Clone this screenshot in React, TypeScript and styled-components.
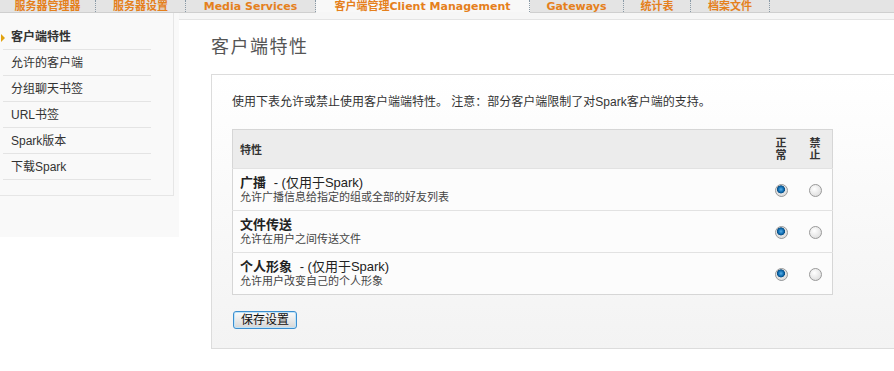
import styled, { createGlobalStyle } from "styled-components";

const GlobalStyle = createGlobalStyle`
  html, body {
    margin: 0;
    padding: 0;
    background: #ffffff;
    font-family: "Liberation Sans", "Noto Sans CJK SC", sans-serif;
    color: #333;
  }
`;

const tabs = [
  { label: "服务器管理器", width: 95 },
  { label: "服务器设置", width: 89 },
  { label: "Media Services", width: 129 },
  { label: "客户端管理Client Management", width: 213 },
  { label: "Gateways", width: 93 },
  { label: "统计表", width: 66 },
  { label: "档案文件", width: 78 },
];

const menu = ["客户端特性", "允许的客户端", "分组聊天书签", "URL书签", "Spark版本", "下载Spark"];

const features = [
  { name: "广播", note: " - (仅用于Spark)", desc: "允许广播信息给指定的组或全部的好友列表" },
  { name: "文件传送", note: "", desc: "允许在用户之间传送文件" },
  { name: "个人形象", note: " - (仅用于Spark)", desc: "允许用户改变自己的个人形象" },
];

export default function App() {
  return (
    <>
      <GlobalStyle />
      <TabBar>
        {tabs.map((t, i) => (
          <Tab key={t.label} $active={i === 3} $width={t.width}>
            {t.label}
          </Tab>
        ))}
        <TabRest />
      </TabBar>
      <Body>
        <SideColumn>
          <SideBox>
            {menu.map((m, i) => (
              <MenuItem key={m} $active={i === 0}>
                {i === 0 && <Arrow />}
                {m}
              </MenuItem>
            ))}
          </SideBox>
        </SideColumn>
        <Main>
          <MainTop />
          <Content>
            <Title>客户端特性</Title>
            <Panel>
              <Intro>使用下表允许或禁止使用客户端端特性。 注意：部分客户端限制了对Spark客户端的支持。</Intro>
              <Table>
                <thead>
                  <tr>
                    <Th>特性</Th>
                    <ThSmall>正<br />常</ThSmall>
                    <ThSmall>禁<br />止</ThSmall>
                  </tr>
                </thead>
                <tbody>
                  {features.map((f) => (
                    <tr key={f.name}>
                      <Td>
                        <FeatName>
                          <b>{f.name}</b>
                          {f.note && <Note>{f.note}</Note>}
                        </FeatName>
                        <FeatDesc>{f.desc}</FeatDesc>
                      </Td>
                      <TdRadio>
                        <Radio type="radio" name={f.name} defaultChecked />
                      </TdRadio>
                      <TdRadio>
                        <Radio type="radio" name={f.name} />
                      </TdRadio>
                    </tr>
                  ))}
                </tbody>
              </Table>
              <SaveButton>保存设置</SaveButton>
            </Panel>
          </Content>
        </Main>
      </Body>
    </>
  );
}

const TabBar = styled.div`
  display: flex;
  height: 12px;
  background: #e4e4e4;
  border-bottom: 1px solid #cfcfcf;
`;

const Tab = styled.div<{ $active?: boolean; $width: number }>`
  width: ${(p) => p.$width}px;
  flex-shrink: 0;
  height: 12px;
  line-height: 13px;
  border-right: 1px dotted #8a9aa6;
  font-family: "DejaVu Sans", "Noto Sans CJK SC", sans-serif;
  font-size: 11px;
  font-weight: bold;
  text-align: center;
  color: #e5801c;
  white-space: nowrap;
  background: ${(p) => (p.$active ? "#f8f8f8" : "transparent")};
  ${(p) => p.$active && "box-shadow: 0 1px 0 #f6f6f6;"}
`;

const TabRest = styled.div`
  flex: 1;
`;

const Body = styled.div`
  display: flex;
  align-items: flex-start;
`;

const SideColumn = styled.div`
  width: 179px;
  height: 224px;
  flex-shrink: 0;
  background: #f9f9f9;
`;

const SideBox = styled.div`
  width: 174px;
  height: 183px;
  padding-top: 12px;
  box-sizing: border-box;
  border-right: 1px solid #e6e6e6;
  border-bottom: 1px solid #e6e6e6;
`;

const MenuItem = styled.div<{ $active?: boolean }>`
  position: relative;
  width: 148px;
  height: 25px;
  margin-left: 3px;
  padding-left: 8px;
  box-sizing: border-box;
  border-bottom: 1px solid #e4e4e4;
  line-height: 25px;
  font-size: 12px;
  font-weight: ${(p) => (p.$active ? "bold" : "normal")};
  color: #333;
  & + & {
    height: 26px;
    line-height: 26px;
  }
`;

const Arrow = styled.span`
  position: absolute;
  left: -2px;
  top: 9px;
  width: 0;
  height: 0;
  border-top: 4px solid transparent;
  border-bottom: 4px solid transparent;
  border-left: 4px solid #e1a20f;
`;

const Main = styled.div`
  flex: 1;
  min-width: 0;
`;

const MainTop = styled.div`
  height: 6px;
  background: #f6f6f6;
  border-bottom: 1px solid #e4e4e4;
`;

const Content = styled.div`
  padding-left: 32px;
`;

const Title = styled.h1`
  margin: 0;
  padding-top: 16px;
  height: 38px;
  line-height: 22px;
  font-size: 18px;
  font-weight: normal;
  letter-spacing: 1.5px;
  color: #555;
`;

const Panel = styled.div`
  border: 1px solid #dcdcdc;
  border-right: none;
  background: linear-gradient(#ffffff, #f3f3f3);
  padding: 19px 0 19px 20px;
`;

const Intro = styled.div`
  font-size: 12px;
  line-height: 16px;
  color: #333;
  margin-bottom: 19px;
`;

const Table = styled.table`
  width: 601px;
  border-collapse: collapse;
  border: 1px solid #d6d6d6;
  background: #fcfcfc;
`;

const Th = styled.th`
  height: 38px;
  padding: 0 0 0 7px;
  text-align: left;
  font-size: 11px;
  font-weight: bold;
  color: #333;
  background: #ececec;
`;

const ThSmall = styled.th`
  width: 34px;
  padding: 0;
  text-align: center;
  vertical-align: middle;
  font-size: 11px;
  line-height: 12px;
  font-weight: bold;
  color: #333;
  background: #ececec;
`;

const Td = styled.td`
  height: 41px;
  padding: 0 0 0 7px;
  border-top: 1px solid #e2e2e2;
  vertical-align: middle;
`;

const TdRadio = styled.td`
  border-top: 1px solid #e2e2e2;
  text-align: center;
  vertical-align: middle;
  padding: 0;
`;

const FeatName = styled.div`
  font-size: 13px;
  line-height: 16px;
  color: #222;
`;

const Note = styled.span`
  font-weight: normal;
  margin-left: 4px;
`;

const FeatDesc = styled.div`
  font-size: 11px;
  line-height: 13px;
  color: #444;
`;

const Radio = styled.input`
  appearance: none;
  margin: 0;
  width: 13px;
  height: 13px;
  border-radius: 50%;
  border: 1px solid #9a9a9a;
  background: radial-gradient(circle at 40% 35%, #ffffff 0%, #e2e2e2 70%, #cfcfcf 100%);
  box-sizing: border-box;
  vertical-align: middle;
  &:checked {
    background: radial-gradient(circle at 45% 40%, #5ab0e8 0%, #0e6bb0 30%, #0a4d82 42%, #e6e6e6 48%, #d0d0d0 100%);
  }
`;

const SaveButton = styled.button`
  display: block;
  margin-top: 16px;
  margin-left: 1px;
  width: 64px;
  height: 18px;
  padding: 0;
  border: 1px solid #3c8ed0;
  border-radius: 3px;
  background: linear-gradient(#fbfbfb, #e6e6e6 60%, #d6d6d6);
  box-shadow: inset 0 0 0 1px #bfe4f8;
  font-family: "Liberation Sans", "Noto Sans CJK SC", sans-serif;
  font-size: 12px;
  line-height: 14px;
  color: #111;
`;
